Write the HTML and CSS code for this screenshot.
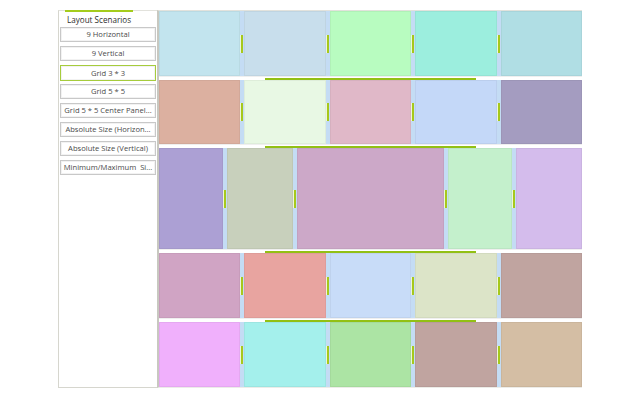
FILE: index.html
```html
<!DOCTYPE html>
<html lang="en">
<head>
<meta charset="utf-8">
<title>Layout Scenarios</title>
<link rel="stylesheet" href="styles.css">
</head>
<body>
<div class="app">
  <aside class="sidebar">
    <div class="sidebar-accent"></div>
    <div class="sidebar-title">Layout Scenarios</div>
    <div class="scenario-list">
      <div class="scenario">9 Horizontal</div>
      <div class="scenario">9 Vertical</div>
      <div class="scenario is-selected">Grid 3 * 3</div>
      <div class="scenario">Grid 5 * 5</div>
      <div class="scenario">Grid 5 * 5 Center Panel...</div>
      <div class="scenario">Absolute Size (Horizon...</div>
      <div class="scenario">Absolute Size (Vertical)</div>
      <div class="scenario">Minimum/Maximum&nbsp; Si...</div>
    </div>
  </aside>
  <main class="layout">
    <div class="row row-std">
      <div class="cell c11"></div><div class="vsplit"><span class="vgrip"></span></div>
      <div class="cell c12"></div><div class="vsplit"><span class="vgrip"></span></div>
      <div class="cell c13"></div><div class="vsplit"><span class="vgrip"></span></div>
      <div class="cell c14"></div><div class="vsplit"><span class="vgrip"></span></div>
      <div class="cell c15"></div>
    </div>
    <div class="hsplit"><span class="hgrip"></span></div>
    <div class="row row-short">
      <div class="cell c21"></div><div class="vsplit"><span class="vgrip"></span></div>
      <div class="cell c22"></div><div class="vsplit"><span class="vgrip"></span></div>
      <div class="cell c23"></div><div class="vsplit"><span class="vgrip"></span></div>
      <div class="cell c24"></div><div class="vsplit"><span class="vgrip"></span></div>
      <div class="cell c25"></div>
    </div>
    <div class="hsplit"><span class="hgrip"></span></div>
    <div class="row row-tall">
      <div class="cell fixed w64 c31"></div><div class="vsplit"><span class="vgrip"></span></div>
      <div class="cell fixed w66 c32"></div><div class="vsplit"><span class="vgrip"></span></div>
      <div class="cell fixed w147 c33"></div><div class="vsplit"><span class="vgrip"></span></div>
      <div class="cell fixed w64 c34"></div><div class="vsplit"><span class="vgrip"></span></div>
      <div class="cell fixed w66 c35"></div>
    </div>
    <div class="hsplit"><span class="hgrip"></span></div>
    <div class="row row-std">
      <div class="cell c41"></div><div class="vsplit"><span class="vgrip"></span></div>
      <div class="cell c42"></div><div class="vsplit"><span class="vgrip"></span></div>
      <div class="cell c43"></div><div class="vsplit"><span class="vgrip"></span></div>
      <div class="cell c44"></div><div class="vsplit"><span class="vgrip"></span></div>
      <div class="cell c45"></div>
    </div>
    <div class="hsplit"><span class="hgrip"></span></div>
    <div class="row row-std">
      <div class="cell c51"></div><div class="vsplit"><span class="vgrip"></span></div>
      <div class="cell c52"></div><div class="vsplit"><span class="vgrip"></span></div>
      <div class="cell c53"></div><div class="vsplit"><span class="vgrip"></span></div>
      <div class="cell c54"></div><div class="vsplit"><span class="vgrip"></span></div>
      <div class="cell c55"></div>
    </div>
  </main>
</div>
</body>
</html>
```

FILE: styles.css
```css
html, body {
  margin: 0;
  padding: 0;
  background: #ffffff;
}

body {
  font-family: "Open Sans", "Noto Sans", "DejaVu Sans", sans-serif;
}

.app {
  width: 524px;
  height: 378px;
  margin: 10px auto 0;
  display: flex;
  box-sizing: border-box;
}

/* ---------- sidebar ---------- */
.sidebar {
  position: relative;
  width: 99px;
  flex: none;
  box-sizing: border-box;
  border-left: 1px solid #d6d6ce;
  border-top: 1px solid #e2e2dc;
  border-bottom: 1px solid #d6d6ce;
  padding: 0 1px;
  background: #ffffff;
}

.sidebar-accent {
  position: absolute;
  top: -1px;
  left: 6px;
  width: 68px;
  height: 2px;
  background: #a4cc1c;
}

.sidebar-title {
  height: 16px;
  padding-left: 7px;
  font-size: 8.1px;
  line-height: 17px;
  color: #2e2e2e;
  white-space: nowrap;
}

.scenario-list {
  display: flex;
  flex-direction: column;
  gap: 4px;
}

.scenario {
  height: 15px;
  box-sizing: border-box;
  border: 1px solid #c8c8c8;
  box-shadow: inset 0 0 0 1px #f2f2f2;
  background: #ffffff;
  color: #4a4a4a;
  font-size: 7.6px;
  line-height: 13px;
  text-align: center;
  white-space: nowrap;
  overflow: hidden;
}

.scenario.is-selected {
  border-color: #a6cc3c;
  height: 16px;
  margin-bottom: -1px;
  line-height: 14px;
}

/* ---------- splitter layout ---------- */
.layout {
  flex: 1;
  display: flex;
  flex-direction: column;
  border-left: 2px solid #c8c8c0;
  border-top: 1px solid #e2e2dc;
  border-bottom: 1px solid #ecece8;
  box-sizing: border-box;
}

.row {
  display: flex;
  flex: none;
}

.row-std { height: 65px; }
.row-short { height: 64px; }
.row-tall { height: 101px; }

.cell {
  flex: 1 1 0;
  box-sizing: border-box;
  border: 1px solid rgba(0, 0, 0, 0.045);
}

.cell.fixed { flex: none; }
.w64 { width: 64px; }
.w66 { width: 66px; }
.w147 { width: 147px; }

.vsplit {
  width: 4px;
  flex: none;
  background: #c4dcf4;
  display: flex;
  align-items: center;
  justify-content: center;
}

.vgrip {
  width: 2px;
  height: 18px;
  background: #a6c81c;
  box-shadow: -1px 0 0 #eef6d8;
}

.hsplit {
  height: 4px;
  flex: none;
  background: #ffffff;
  border-top: 1px solid #efefef;
  box-sizing: border-box;
  display: flex;
  align-items: center;
  justify-content: center;
}

.hgrip {
  width: 50%;
  height: 2px;
  background: #92c014;
}

/* ---------- cell colours ---------- */
.c11 { background: #c2e4ee; }
.c12 { background: #c8deec; }
.c13 { background: #b8fcc0; }
.c14 { background: #9ceede; }
.c15 { background: #b0dee4; }

.c21 { background: #dcb0a0; }
.c22 { background: #e8f8e4; }
.c23 { background: #e0b8c8; }
.c24 { background: #c4d8f8; }
.c25 { background: #a49cc0; }

.c31 { background: #aca0d4; }
.c32 { background: #c8d0bc; }
.c33 { background: #cca8c8; }
.c34 { background: #c4f0cc; }
.c35 { background: #d4bcec; }

.c41 { background: #d0a4c4; }
.c42 { background: #e8a4a0; }
.c43 { background: #c8dcf8; }
.c44 { background: #dce4c8; }
.c45 { background: #c0a4a0; }

.c51 { background: #f0b0fc; }
.c52 { background: #a4f0ec; }
.c53 { background: #ace4a4; }
.c54 { background: #c0a4a0; }
.c55 { background: #d4bea4; }
```
